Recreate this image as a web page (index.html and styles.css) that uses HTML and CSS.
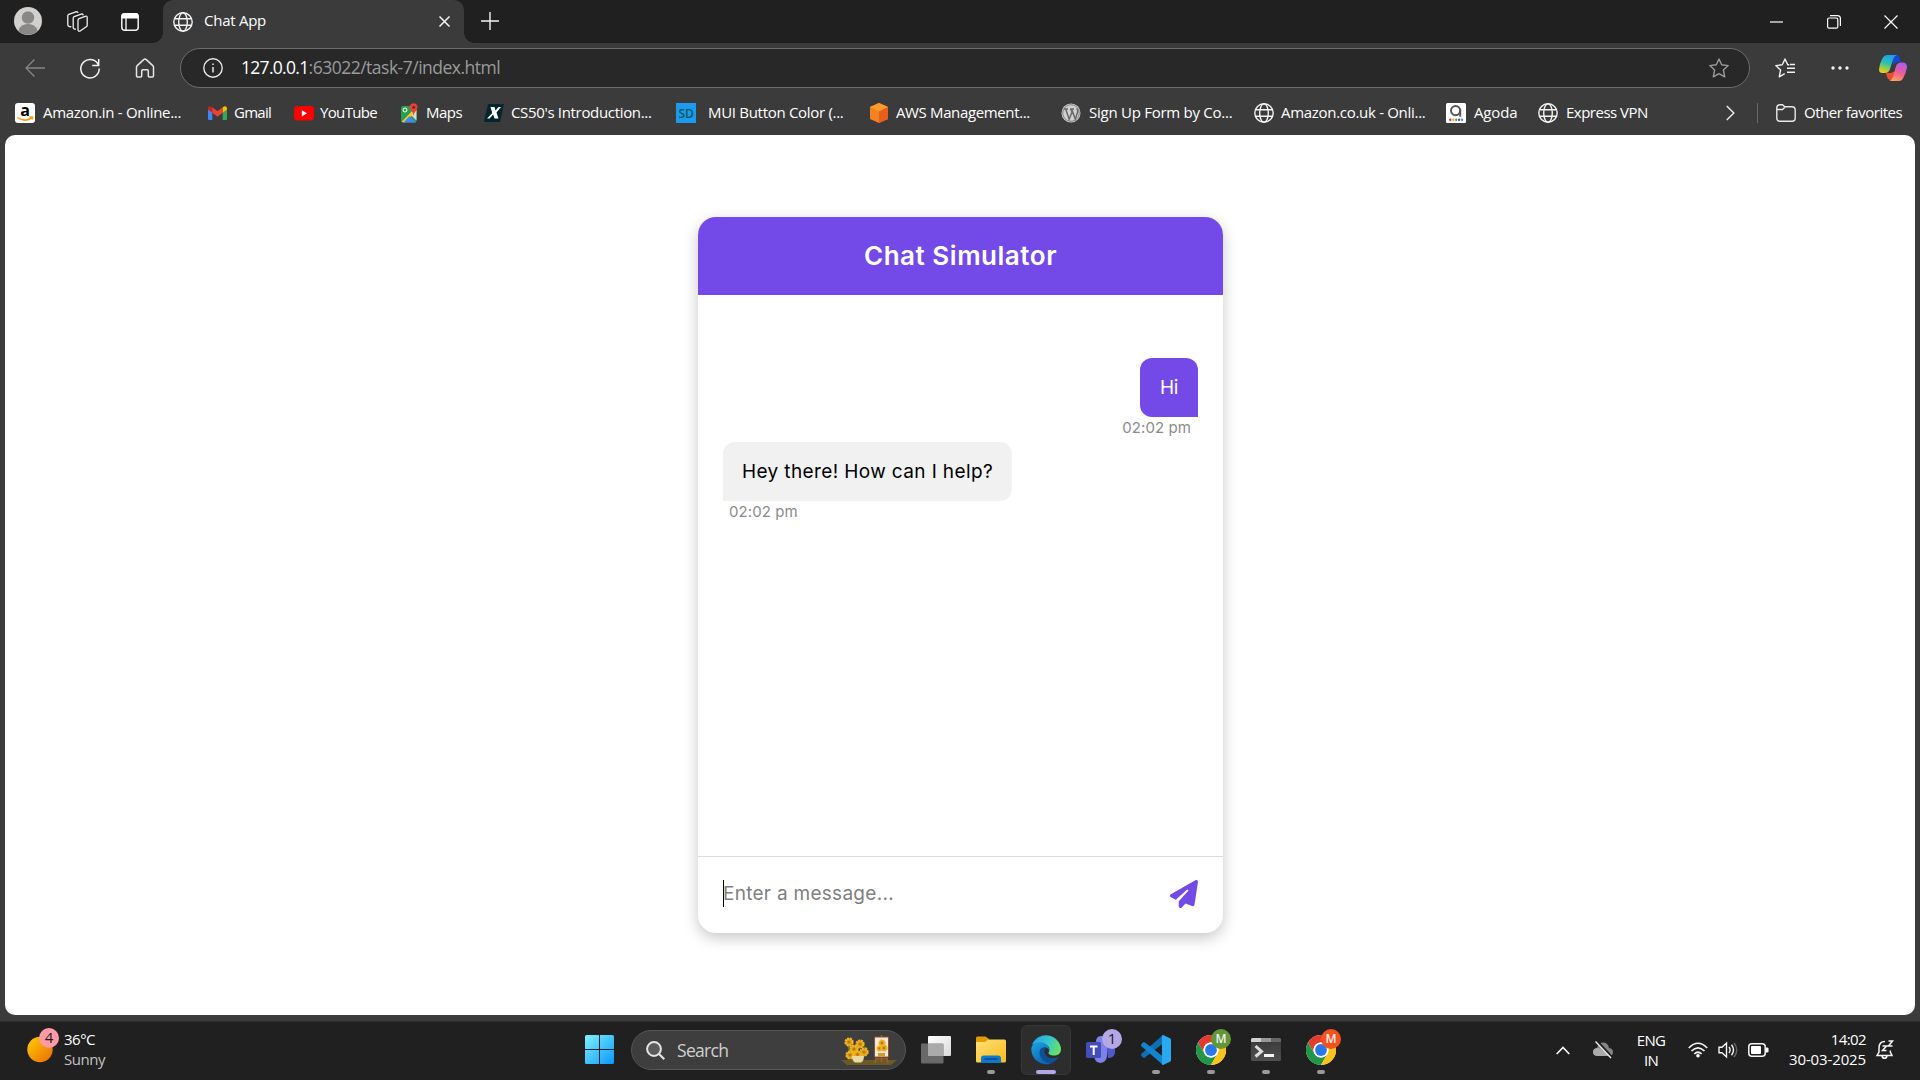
FILE: index.html
```html
<!DOCTYPE html>
<html lang="en">
<head>
<meta charset="utf-8">
<title>Chat App</title>
<link rel="stylesheet" href="styles.css">
</head>
<body>
<svg class="defs" width="0" height="0" aria-hidden="true">
  <defs>
    <linearGradient id="sun" x1="0" y1="0" x2="1" y2="1"><stop offset="0.1" stop-color="#ffc400"/><stop offset="1" stop-color="#e86a04"/></linearGradient>
    <linearGradient id="win" x1="0" y1="0" x2="1" y2="1"><stop offset="0" stop-color="#7ff1ff"/><stop offset="1" stop-color="#0a97fb"/></linearGradient>
    <linearGradient id="view" x1="0" y1="0" x2="1" y2="1"><stop offset="0" stop-color="#fff"/><stop offset="1" stop-color="#d9d9d9"/></linearGradient>
    <linearGradient id="folder" x1="0" y1="0" x2="1" y2="1"><stop offset="0" stop-color="#ffdf76"/><stop offset="1" stop-color="#fcbc1b"/></linearGradient>
    <linearGradient id="edgeTop" x1="0" y1="0.2" x2="1" y2="0.6"><stop offset="0" stop-color="#2a9fe6"/><stop offset="0.5" stop-color="#33c4d2"/><stop offset="1" stop-color="#68e264"/></linearGradient>
    <linearGradient id="edgeLeft" x1="0" y1="0" x2="0.6" y2="1"><stop offset="0" stop-color="#1fa2e2"/><stop offset="1" stop-color="#0767b8"/></linearGradient>
    <linearGradient id="copA" x1="0.6" y1="0" x2="0.3" y2="1"><stop offset="0" stop-color="#1f9df1"/><stop offset="0.45" stop-color="#2bbfb4"/><stop offset="0.8" stop-color="#a5cf3d"/><stop offset="1" stop-color="#f6c816"/></linearGradient>
    <linearGradient id="copB" x1="0.7" y1="0" x2="0.3" y2="1"><stop offset="0" stop-color="#a95cf2"/><stop offset="0.5" stop-color="#ec5c96"/><stop offset="1" stop-color="#ffa25c"/></linearGradient>
    <linearGradient id="term" x1="0" y1="0" x2="0" y2="1"><stop offset="0" stop-color="#383838"/><stop offset="1" stop-color="#505050"/></linearGradient>
    <symbol id="globe" viewBox="0 0 20 20"><g fill="none" stroke="#f3f3f3" stroke-width="1.4"><circle cx="10" cy="10" r="9.2"/><ellipse cx="10" cy="10" rx="4.3" ry="9.2"/><path d="M1.6 6.8h16.8M1.6 13.2h16.8"/></g></symbol>
    <symbol id="chrome" viewBox="0 0 30 30">
      <circle cx="15" cy="15" r="15" fill="#fff"/>
      <path d="M2 7.5A15 15 0 0 1 28 7.5H15a7.5 7.5 0 0 0-6.5 11.25z" fill="#e33b2e"/>
      <path d="M2 7.5A15 15 0 0 0 15 30l6.500-11.250a7.5 7.5 0 0 1-13 0z" fill="#219548"/>
      <path d="M28 7.5A15 15 0 0 1 15 30l6.500-11.250a7.5 7.5 0 0 0-6.5-11.250z" fill="#fcc418"/>
      <circle cx="15" cy="15" r="7.5" fill="#fff"/><circle cx="15" cy="15" r="5.9" fill="#2a78e8"/>
    </symbol>
    <symbol id="bloom" viewBox="0 0 10 10"><circle cx="5" cy="5" r="3.6" fill="#e8a317" stroke="#f0b625" stroke-width="2" stroke-dasharray="2.2 .7"/><circle cx="5" cy="5" r="1.6" fill="#b77a12"/></symbol>
  </defs>
</svg>

<header class="tabbar">
  <svg class="avatar" width="28" height="28" viewBox="0 0 28 28"><circle cx="14" cy="14" r="14" fill="#d2d0ce"/><circle cx="14" cy="10.500" r="6.200" fill="#8a8886"/><path d="M4.500 24a9.500 7 0 0 1 19 0A14 14 0 0 1 4.500 24z" fill="#8a8886"/></svg>
  <svg width="21" height="21" viewBox="0 0 21 21" fill="none" stroke="#f0f0f0" stroke-width="1.300" stroke-linejoin="round"><path d="M12 7.700l6.200-2.400q2-.6 2 1.200v7.800q0 1-1 1.500l-5.700 4q-2.500 1.200-2.500-1.200V9.500q0-1.300 1-1.800z"/><path d="M9 18.200q-2.800.2-2.800-2V7.200q0-1.200 1-1.600l7-2.500q1.800-.5 2 1.200"/><path d="M4.300 15.700Q.8 16 .8 13.500V5q0-1.200 1-1.600L8.800.9q1.800-.5 2.300 1"/></svg>
  <svg width="18" height="18" viewBox="0 0 18 18"><rect x=".8" y=".8" width="16.400" height="16.400" rx="3" fill="none" stroke="#f3f3f3" stroke-width="1.500"/><path d="M.5 5.500V3a3 3 0 0 1 3-3h11a3 3 0 0 1 3 3v2.500z" fill="#fff"/><path d="M5 5v12" stroke="#f3f3f3" stroke-width="1.400"/></svg>
  <div class="tab">
    <svg width="20" height="20"><use href="#globe"/></svg>
    <span class="tab-title">Chat App</span>
    <svg class="tab-close" width="11" height="11" viewBox="0 0 11 11" stroke="#f5f5f5" stroke-width="1.500"><path d="M.5.5l10 10M10.500.5l-10 10"/></svg>
  </div>
  <svg class="new-tab" width="18" height="18" viewBox="0 0 18 18" stroke="#f3f3f3" stroke-width="1.400"><path d="M0 9h18M9 0v18"/></svg>
  <div class="window-buttons">
    <svg width="14" height="14" viewBox="0 0 14 14"><path d="M0 7h13" stroke="#fff" stroke-width="1.200"/></svg>
    <svg width="14" height="14" viewBox="0 0 14 14" fill="none" stroke="#fff" stroke-width="1.200"><rect x=".6" y="3" width="10.200" height="10.200" rx="1.500"/><path d="M3 .6h7.500q2.900 0 2.900 2.900V11"/></svg>
    <svg width="14" height="14" viewBox="0 0 14 14" stroke="#fff" stroke-width="1.200"><path d="M.5.5l13 13M13.500.5l-13 13"/></svg>
  </div>
</header>

<nav class="toolbar">
  <svg width="20" height="20" viewBox="0 0 20 20" fill="none" stroke="#858585" stroke-width="1.400"><path d="M20 10H1M9.500 1.500L1 10l8.500 8.500"/></svg>
  <svg width="20" height="20" viewBox="0 0 20 20" fill="none" stroke="#f3f3f3" stroke-width="1.500"><path d="M18.800 8A9.200 9.200 0 1 0 19.200 10.500M18.700 1v6.500h-6.500"/></svg>
  <svg width="20" height="20" viewBox="0 0 20 20" fill="none" stroke="#e5e5e5" stroke-width="1.500" stroke-linejoin="round"><path d="M1.500 9q0-.8.700-1.400l6.500-6q1.300-1 2.600 0l6.500 6q.7.600.7 1.400v9q0 1-1 1h-3.200q-1 0-1-1v-5q0-1.200-1.200-1.200H7.900q-1.200 0-1.200 1.200v5q0 1-1 1H2.500q-1 0-1-1z"/></svg>
  <div class="address">
    <svg width="20" height="20" viewBox="0 0 20 20"><circle cx="10" cy="10" r="9.200" fill="none" stroke="#e8e8e8" stroke-width="1.400"/><path d="M10 9v5.500M10 5.500v1.600" stroke="#e8e8e8" stroke-width="1.500"/></svg>
    <span class="url"><b>127.0.0.1</b>:63022/task-7/index.html</span>
    <svg width="20" height="20" viewBox="0 0 20 20" fill="none" stroke="#9a9a9a" stroke-width="1.400" stroke-linejoin="round"><path d="M10 1l2.700 5.800 6.500.8-4.800 4.400 1.300 6.800L10 15.600l-5.700 3.200L5.600 12 .8 7.600l6.500-.8z"/></svg>
  </div>
  <svg width="21" height="20" viewBox="0 0 21 20" fill="none" stroke="#f3f3f3" stroke-width="1.400" stroke-linejoin="round"><path d="M14.300 6.800h-1.600L10 1 7.300 6.800l-6.500.8L5.600 12l-1.300 6.800 5.400-3.100M12 10.200h8M12 14.200h8M15 6.500h5"/></svg>
  <svg width="18" height="20" viewBox="0 0 18 20" fill="#f3f3f3"><circle cx="2" cy="10" r="1.700"/><circle cx="9" cy="10" r="1.700"/><circle cx="16" cy="10" r="1.700"/></svg>
  <svg width="28" height="26" viewBox="0 0 28 26"><path d="M14 0h3q3 0 4 4l1 3h-4l-4 3z" fill="#1348d8"/><path d="M7 18h5l4-2-1 9h-3q-3 0-4-3z" fill="#f04c31"/><path d="M8 0h10q-3 1-3.800 4L11 14q-1.300 4-5 4H3.500Q0 18 0 14.500 1 7 4 2.500 5.300 0 8 0z" fill="url(#copA)"/><path d="M20 26H10q3-.8 4-4l3-11q1.300-3.500 5-3.500h2.500Q28 8 28 12q-1 7-4 11.500Q22.700 26 20 26z" fill="url(#copB)"/></svg>
</nav>

<nav class="bookmarks">
  <a class="bm bm-amazon"><svg width="20" height="20" viewBox="0 0 20 20"><rect width="20" height="20" rx="3" fill="#fff"/><text x="10" y="13" text-anchor="middle" class="amazon-a">a</text><path d="M2.500 14.500q7 5 14 .5M14.500 14h3v2.500" fill="none" stroke="#ff9900" stroke-width="1.500"/></svg><span>Amazon.in - Online...</span></a>
  <a class="bm bm-gmail"><svg width="19" height="14" viewBox="0 0 19 14"><path d="M0 2v11q0 1 1 1h3.300V5z" fill="#4285f4"/><path d="M19 2v11q0 1-1 1h-3.300V5z" fill="#34a853"/><path d="M0 2.500Q0 0 2.500.3l2 1.200v5.300L0 3.500z" fill="#c5221f"/><path d="M19 2.500Q19 0 16.500.3l-2 1.200v5.300L19 3.500z" fill="#fbbc04"/><path d="M4.300 1.300l5.200 4 5.200-4v5.400l-5.200 4-5.200-4z" fill="#ea4335"/></svg><span>Gmail</span></a>
  <a class="bm bm-youtube"><svg width="20" height="15" viewBox="0 0 20 15"><rect width="20" height="14.500" rx="3.500" fill="#f00"/><path d="M7.800 4.200v6.200l5.200-3.100z" fill="#fff"/></svg><span>YouTube</span></a>
  <a class="bm bm-maps"><svg width="19" height="20" viewBox="0 0 19 20"><rect x="1" y="3" width="15.500" height="16.500" rx="2" fill="#28a052"/><path d="M10 11l6.500 6.500V7z" fill="#d8dce0"/><path d="M1.500 19L13 7l3.500 1L5 19.500z" fill="#fbc82b"/><path d="M3.500 19.500l6-6.500 6.500 6.500z" fill="#4387f2"/><circle cx="5" cy="7" r="2" fill="none" stroke="#fff" stroke-width="1"/><path d="M13.500 13q0-3.500-2.400-5.500a4 4 0 1 1 5.100-.3q-2.300 2.300-2.700 5.800z" fill="#e64436"/><circle cx="13.700" cy="4.300" r="1.500" fill="#8d1d14"/></svg><span>Maps</span></a>
  <a class="bm bm-cs50"><svg width="20" height="18" viewBox="0 0 20 18"><path d="M4 0h16l-4 18H0z" fill="#03262e"/><path d="M6.500 3h4l1 3.500L14.500 3H17l-4.500 5.500 2 6h-4l-1.300-4L5.500 14.500H3L8.300 9z" fill="#fff"/></svg><span>CS50's Introduction...</span></a>
  <a class="bm bm-mui"><svg width="20" height="20" viewBox="0 0 20 20"><rect width="20" height="20" fill="#1b9af0"/><text x="10" y="14.500" text-anchor="middle" class="sd">SD</text></svg><span>MUI Button Color (...</span></a>
  <a class="bm bm-aws"><svg width="18" height="20" viewBox="0 0 18 20"><path d="M9 0l9 4v12l-9 4-9-4V4z" fill="#f58220"/><path d="M9 0l9 4-9 4.500L0 4z" fill="#fc9a2b"/><path d="M18 4v12l-9 4V8.500z" fill="#e95e1c"/></svg><span>AWS Management...</span></a>
  <a class="bm bm-form"><svg width="20" height="20" viewBox="0 0 20 20"><circle cx="10" cy="10" r="9.500" fill="#d0d0d0"/><circle cx="10" cy="10" r="8.300" fill="none" stroke="#858585"/><path d="M3 6h4M9 6h4M4.700 6.200l3.500 10L11 9 9.800 6.200M11 7l3.200 9 2.500-7q.3-2-1-3.500" fill="none" stroke="#6a6a6a" stroke-width="1.500"/></svg><span>Sign Up Form by Co...</span></a>
  <a class="bm bm-uk"><svg width="20" height="20"><use href="#globe"/></svg><span>Amazon.co.uk - Onli...</span></a>
  <a class="bm bm-agoda"><svg width="20" height="20" viewBox="0 0 20 20"><rect width="20" height="20" rx="1.500" fill="#fff"/><circle cx="9.600" cy="7.600" r="4.600" fill="none" stroke="#555" stroke-width="2"/><path d="M14.200 7v6.700" stroke="#555" stroke-width="2"/><g><circle cx="4.300" cy="16.800" r="1.200" fill="#e12b3c"/><circle cx="7.300" cy="16.800" r="1.200" fill="#f6a81c"/><circle cx="10.200" cy="16.800" r="1.200" fill="#4caf50"/><circle cx="13.100" cy="16.800" r="1.200" fill="#6b4ca0"/><circle cx="16" cy="16.800" r="1.200" fill="#2fa3e6"/></g></svg><span>Agoda</span></a>
  <a class="bm bm-vpn"><svg width="20" height="20"><use href="#globe"/></svg><span>Express VPN</span></a>
  <svg width="9" height="16" viewBox="0 0 9 16" fill="none" stroke="#e8e8e8" stroke-width="1.500"><path d="M.8 1l7 7-7 7"/></svg>
  <i class="divider"></i>
  <a class="bm bm-other"><svg width="20" height="18" viewBox="0 0 20 18" fill="none" stroke="#e8e8e8" stroke-width="1.400"><path d="M.8 4q0-3.200 3.200-3.200h2.500l2.300 2H16q3.200 0 3.200 3.200v8q0 3.200-3.200 3.200H4Q.8 17.200.8 14zM.8 5.500h5.700l2.300-2.300"/></svg><span>Other favorites</span></a>
</nav>

<main class="page">
  <section class="chat">
    <h1 class="chat-header">Chat Simulator</h1>
    <div class="messages">
      <div class="message sent"><p class="bubble">Hi</p><time>02:02 pm</time></div>
      <div class="message received"><p class="bubble">Hey there! How can I help?</p><time>02:02 pm</time></div>
    </div>
    <div class="composer">
      <div class="field"><i class="caret"></i><span>Enter a message...</span></div>
      <svg width="28" height="28" viewBox="0 0 512 512"><path fill="#734ae8" d="M498.100 5.600c10.100 7 15.400 19.100 13.500 31.200l-64 416c-1.500 9.700-7.400 18.200-16 23s-18.900 5.400-28 1.600L284 427.700l-68.500 74.100c-8.900 9.700-22.900 12.900-35.200 8.100S160 493.200 160 480V396.400c0-4 1.500-7.800 4.200-10.700L331.800 202.800c5.800-6.300 5.600-16-.4-22s-15.700-6.400-22-.7L106 360.800 17.700 316.600C7.100 311.300 .3 300.700 0 288.900s5.900-22.800 16.100-28.700l448-256c10.700-6.100 23.900-5.500 34 1.400z"/></svg>
    </div>
  </section>
</main>

<footer class="taskbar">
  <div class="weather">
    <svg width="32" height="36" viewBox="0 0 32 36"><circle cx="13" cy="21.500" r="12.700" fill="url(#sun)"/><circle cx="22" cy="10" r="10" fill="#ff99a4"/><text x="22" y="15.200" text-anchor="middle" class="badge-text">4</text></svg>
    <div class="weather-text"><span class="temp">36°C</span><span class="sky">Sunny</span></div>
  </div>

  <div class="apps">
    <div class="app"><svg width="29" height="29" viewBox="0 0 29 29"><path d="M0 1.500Q0 0 1.500 0H14v14H0zM15 0h12.500Q29 0 29 1.500V14H15zM0 15h14v14H1.500Q0 29 0 27.500zM15 15h14v12.500q0 1.500-1.500 1.500H15z" fill="url(#win)"/></svg></div>
    <div class="search">
      <svg width="19" height="19" viewBox="0 0 19 19" fill="none" stroke="#e5e5e5" stroke-width="2"><circle cx="8" cy="8" r="6.900" fill="#5b5b5b"/><path d="M13 13l5.300 5.300"/></svg>
      <span>Search</span>
      <svg class="flowers" width="56" height="30" viewBox="0 0 56 30"><path d="M0 25h56l-6 5H6z" fill="#6b5a26"/><path d="M8 10q4 14 8 14t9-12" stroke="#6d7520" stroke-width="4" fill="none"/><use href="#bloom" x="3" y="2" width="10" height="10"/><use href="#bloom" x="14" y="4" width="10" height="10"/><use href="#bloom" x="8" y="9" width="10" height="10"/><use href="#bloom" x="4" y="15" width="10" height="10"/><use href="#bloom" x="18" y="12" width="10" height="10"/><use href="#bloom" x="12" y="15" width="9" height="9"/><path d="M11 21h12q0 5-3 6.500h-6Q11 26 11 21z" fill="#ead9a0"/><path d="M36 19l-2 9M45 19l2 9M40.500 0v2M40.500 21v6M35 24h11" stroke="#a55b27" stroke-width="1.500"/><path d="M33.500 2h14v20h-14z" fill="#f1e9da" stroke="#93501f"/><path d="M37 18h7v3h-7z" fill="#d39a2e"/><use href="#bloom" x="37" y="4" width="8" height="8"/><use href="#bloom" x="35" y="10" width="7" height="7"/><use href="#bloom" x="39" y="9" width="8" height="8"/></svg>
    </div>
    <div class="app"><svg width="30" height="28" viewBox="0 0 30 28"><rect x="7" y="0" width="23" height="20" rx="1" fill="url(#view)"/><rect x="0" y="7.500" width="22.500" height="20" rx="1" fill="#777" fill-opacity=".85"/><path d="M7 8h15.500v12H7z" fill="#aaa"/></svg></div>
    <div class="app running"><svg width="30" height="28" viewBox="0 0 30 28"><path d="M0 2q0-1.500 1.500-1.500h8L13 3v6H0z" fill="#e29d05"/><path d="M0 6h9l3.500-2.500h16Q30 3.500 30 5v20q0 1.500-1.500 1.500h-27Q0 26.500 0 25z" fill="url(#folder)"/><path d="M5 27v-4.500q0-3 3-3h14q3 0 3 3V27z" fill="#0c79ce"/><path d="M8.500 23h13" stroke="#064a85" stroke-width="1.500"/></svg></div>
    <div class="app active"><svg width="30" height="30" viewBox="0 0 30 30"><path d="M1 10A15 15 0 0 1 30 14c0 5-3.500 6.500-7 6.500-4 0-6-1.500-5.500-3 2-2 1-7-4-8.500C8 7.500 3 9 1 10z" fill="url(#edgeTop)"/><path d="M.3 13.500C1 9 5 7 9.500 7.300c6 .4 9 4.500 8.500 8-.5-1.500-2-2.800-4-2.800-3.500.3-5 4-3.500 8.500 1.500 4 5 6.500 9 7.700A15 15 0 0 1 .3 13.500z" fill="url(#edgeLeft)"/><path d="M9 15c-2 6 3 13 10.500 13.700 3-1 6-3.200 7.800-6.200.3-.6 0-.8-.6-.5C20 25 13 22 13.500 15.500c.2-1.500 1-2.500 2-3C12.500 12 9.800 13 9 15z" fill="#104f95"/></svg></div>
    <div class="app"><svg class="lift" width="36" height="34" viewBox="0 0 36 34"><circle cx="15" cy="12" r="5" fill="#7b83eb"/><path d="M20 14h9v10q-1 5-7 5z" fill="#5059c9"/><path d="M8 15h13v12q-.5 6-6.500 7Q8 33 8 26z" fill="#7b83eb"/><rect x="0" y="13" width="15" height="16" rx="1.500" fill="#454db8"/><path d="M4 17.500h7.500M7.700 17.500V26" stroke="#fff" stroke-width="2"/><circle cx="26" cy="10" r="10" fill="#b4a7e5"/><text x="26" y="15.300" text-anchor="middle" class="badge-text">1</text></svg></div>
    <div class="app running"><svg width="30" height="30" viewBox="0 0 30 30"><path d="M22 0v8.500L4 22.500q-1 .6-2 0L.5 21q-1-1.200 0-2.200z" fill="#0f6fb5"/><path d="M22 30v-8.500L4 7.500q-1-.6-2 0L.5 9q-1 1.200 0 2.200z" fill="#1384cf"/><path d="M22 0l7 3.300q1 .5 1 1.600v20.200q0 1.100-1 1.600L22 30q-1 .2-1-1V1q0-1.200 1-1z" fill="#2aa9f3"/></svg></div>
    <div class="app running"><svg width="30" height="30"><use href="#chrome"/></svg><b class="profile green">M</b></div>
    <div class="app running"><svg width="30" height="23" viewBox="0 0 30 23"><rect width="30" height="23" rx="1.500" fill="url(#term)"/><path d="M0 4V1.500Q0 0 1.500 0H10v4z" fill="#d0d0d0"/><path d="M10 0h10v4H10z" fill="#999"/><path d="M20 0h8.500Q30 0 30 1.500V4H20z" fill="#666"/><path d="M4.500 8l6 5.500-6 5" fill="none" stroke="#ddd" stroke-width="3"/><path d="M13 17.500h10" stroke="#f3f3f3" stroke-width="3"/></svg></div>
    <div class="app running"><svg width="30" height="30"><use href="#chrome"/></svg><b class="profile orange">M</b></div>
  </div>

  <div class="tray">
    <svg width="14" height="9" viewBox="0 0 14 9" fill="none" stroke="#f5f5f5" stroke-width="1.700"><path d="M.7 8L7 1.500 13.300 8"/></svg>
    <svg width="20" height="18" viewBox="0 0 20 18"><path d="M5 15q-5 0-5-4 0-3.500 4-4 1.500-5.500 6-5.500 5 0 6 5.500 4 .5 4 4t-4 4z" fill="#858585"/><path d="M5 15q-5 0-5-4 0-3.500 4-4 4 0 6 3l9.500 3Q18.500 15 16 15z" fill="#aaa"/><path d="M3.500 0L19 16.500" stroke="#202020" stroke-width="3"/><path d="M2.500.5L18 17" stroke="#eee" stroke-width="1.400"/></svg>
    <div class="lang"><span>ENG</span><span>IN</span></div>
    <svg class="wifi" width="20" height="16" viewBox="0 0 20 16" fill="none" stroke="#f5f5f5" stroke-width="1.700"><path d="M.8 6q9.200-9.500 18.400 0M3.500 9q6.500-6.500 13 0M6.300 12q3.700-3.500 7.400 0"/><circle cx="10" cy="13.800" r="1.800" fill="#fff" stroke="none"/></svg>
    <svg class="volume" width="20" height="16" viewBox="0 0 20 16" fill="none" stroke="#f5f5f5" stroke-width="1.400"><path d="M1 5.200h3L8.500 1v14L4 10.800H1zM11 5q2.200 3 0 6M13.500 2.800q4 5.200 0 10.400"/><path d="M16 .8q5.500 7.200 0 14.400" stroke="#666"/></svg>
    <svg class="battery" width="21" height="14" viewBox="0 0 21 14"><rect x=".8" y=".8" width="16.400" height="12.400" rx="3" fill="none" stroke="#f5f5f5" stroke-width="1.500"/><rect x="3" y="3" width="10" height="8" rx="1" fill="#fff"/><path d="M18 4.500h1q1.500 0 1.500 1.300v2.400q0 1.300-1.500 1.300h-1z" fill="#fff"/></svg>
    <div class="clock"><span class="hour">14:02</span><span class="date">30-03-2025</span></div>
    <svg class="bell" width="18" height="19" viewBox="0 0 18 19" fill="none" stroke="#f5f5f5" stroke-width="1.500"><path d="M9 1.500Q3 1.500 3 8v4L1 15.500h15L14.300 12v-1.500M6 16q.5 2.300 2.500 2.300T11 16M6.500 6h4l-4 4.500h4M12.500 1h4l-4 5h4"/></svg>
  </div>
</footer>
</body>
</html>
```
FILE: styles.css
```css
* { box-sizing: border-box; }
body {
  margin: 0;
  width: 1920px;
  height: 1080px;
  overflow: hidden;
  display: grid;
  grid-template-rows: 43px 50px 42px 880px 6px 59px;
  background: #3b3b3b;
  color: #fff;
  font: 15px/20px "Open Sans", "Noto Sans", sans-serif;
  white-space: nowrap;
}
svg { display: block; flex: none; overflow: visible; }
.defs { position: absolute; }

/* Tab strip */
.tabbar {
  display: flex;
  align-items: center;
  padding-left: 14px;
  background: #202020;
}
.avatar { margin: -1px 25px 0 0; }
.avatar + svg { margin-right: 33px; }
.tab {
  position: relative;
  display: flex;
  align-items: center;
  width: 301px;
  height: 43px;
  margin-left: 24px;
  padding: 0 14px 0 10px;
  border-radius: 10px 10px 0 0;
  background: #3b3b3b;
}
.tab::before, .tab::after {
  content: "";
  position: absolute;
  bottom: 0;
  width: 10px;
  height: 10px;
}
.tab::before { left: -10px; background: radial-gradient(circle at 0 0, transparent 9.5px, #3b3b3b 10px); }
.tab::after { right: -10px; background: radial-gradient(circle at 100% 0, transparent 9.5px, #3b3b3b 10px); }
.tab-title { margin: -4px 0 0 11px; letter-spacing: -.26px; }
.tab-close { margin-left: auto; }
.new-tab { margin-left: 17px; margin-top: -2px; }
.window-buttons { display: flex; gap: 43px; margin-left: auto; padding-right: 22px; }

/* Navigation row */
.toolbar {
  display: grid;
  grid-template-columns: 55px 55px 45px 1595px 56px 48px 28px;
  align-items: center;
  padding-left: 25px;
}
.address {
  display: flex;
  align-items: center;
  width: 1570px;
  height: 40px;
  padding: 0 20px 0 22px;
  border: 1px solid #6d6d6d;
  border-radius: 20px;
  background: #282828;
}
.url { margin: -3px auto 0 18px; color: #9b9b9b; font-size: 17.5px; letter-spacing: -.5px; }
.url b { color: #fff; font-weight: 400; letter-spacing: -.7px; }

/* Bookmarks row */
.bookmarks {
  display: grid;
  grid-template-columns: 193px 86px 106px 84px 192px 194px 191px 193px 192px 92px 188px 31px 19px 120px;
  align-items: center;
  padding: 0 0 2px 15px;
}
.bm { display: flex; align-items: center; gap: 8px; letter-spacing: -.3px; }
.bm span { margin-top: -3px; }
.bm-gmail { gap: 7px; letter-spacing: -.72px; }
.bm-youtube { gap: 6px; letter-spacing: -.65px; }
.bm-maps { gap: 7px; letter-spacing: -.52px; }
.bm-cs50 { gap: 7px; letter-spacing: -.33px; }
.bm-mui { gap: 12px; }
.bm-aws { letter-spacing: -.36px; }
.bm-form { letter-spacing: -.26px; }
.bm-uk { gap: 7px; }
.bm-agoda { letter-spacing: -.15px; }
.bm-vpn { letter-spacing: -.5px; }
.bm-other { letter-spacing: -.48px; }
.divider { width: 1px; height: 20px; background: #666; }
.amazon-a { font: 700 16px "Open Sans", sans-serif; fill: #000; }
.sd { font: 600 12px "Open Sans", sans-serif; fill: #075b58; }

/* Page with the chat card */
.page {
  display: flex;
  justify-content: center;
  align-items: flex-start;
  margin: 0 5px;
  padding-top: 82px;
  border-radius: 10px;
  background: #fff;
}
.chat {
  display: flex;
  flex-direction: column;
  width: 525px;
  height: 716px;
  margin-left: 1px;
  border-radius: 18px;
  overflow: hidden;
  background: #fff;
  box-shadow: 0 5px 15px rgba(0, 0, 0, .22);
  color: #000;
  font-family: Inter, "Open Sans", sans-serif;
}
.chat-header {
  height: 78px;
  margin: 0;
  background: #734ae8;
  color: #fff;
  font-size: 26px;
  font-weight: 600;
  line-height: 77px;
  text-align: center;
  letter-spacing: .53px;
}
.messages {
  flex: 1;
  display: flex;
  flex-direction: column;
  gap: 3px;
  padding: 63px 25px 0;
}
.message { display: flex; flex-direction: column; align-items: flex-start; }
.bubble {
  height: 59px;
  margin: 0;
  padding: 0 19px;
  border-radius: 12px 12px 12px 0;
  background: #f1f1f1;
  font-size: 19px;
  line-height: 59px;
  letter-spacing: .38px;
}
.message time { padding: 0 6px; color: #8c8c8c; font-size: 15px; line-height: 22px; letter-spacing: .08px; }
.sent { align-items: flex-end; }
.sent time { padding-right: 7px; }
.sent .bubble { width: 58px; padding-left: 20px; border-radius: 12px 12px 0 12px; background: #734ae8; color: #fff; letter-spacing: -.3px; }
.composer {
  display: flex;
  justify-content: space-between;
  align-items: center;
  height: 77px;
  padding: 0 25px 3px;
  border-top: 1px solid #dcdcdc;
}
.field { position: relative; color: #808080; font-size: 19px; letter-spacing: .28px; }
.caret { position: absolute; left: 0; top: -4px; width: 1px; height: 27px; background: #000; }

/* Taskbar */
.taskbar {
  grid-row: 6;
  display: grid;
  grid-template-columns: 572px 984px 1fr;
  background: #202020;
  border-top: 1px solid #2d2d2d;
}
.weather { display: flex; padding: 6px 0 0 27px; }
.weather-text { display: grid; align-content: start; margin: 1px 0 0 5px; }
.temp { letter-spacing: -.5px; }
.sky { color: #c3c3c3; letter-spacing: -.45px; }
.badge-text { font: 15px "Open Sans", sans-serif; fill: #1c1c1c; }
.apps { display: flex; gap: 5px; padding-top: 3px; }
.app {
  position: relative;
  display: grid;
  place-items: center;
  width: 50px;
  height: 50px;
  padding-bottom: 1px;
  border-radius: 6px;
}
.app:first-child { width: 54px; }
.search {
  display: flex;
  align-items: center;
  width: 275px;
  height: 40px;
  margin: 5px 0 0;
  padding: 0 8px 0 14px;
  border: 1px solid #555;
  border-radius: 20px;
  background: #3e3e3e;
}
.search span { margin-left: 12px; color: #d0d0d0; font-size: 17.5px; letter-spacing: -.7px; }
.flowers { margin-left: auto; }
.active { background: #2d2d2d; border: 1px solid #373737; }
.running::after, .active::after {
  content: "";
  position: absolute;
  bottom: 1px;
  left: 50%;
  width: 8px;
  height: 4px;
  margin-left: -4px;
  border-radius: 2px;
  background: #999;
}
.active::after { bottom: 0; width: 20px; margin-left: -10px; background: #b4a7e5; }
.lift { margin: -8px 0 0 6px; }
.profile {
  position: absolute;
  left: 25px;
  top: 4px;
  width: 20px;
  height: 20px;
  border-radius: 50%;
  color: #f1f1f1;
  font: 600 12px/20px "Open Sans", sans-serif;
  text-align: center;
}
.green { background: #629638; }
.orange { background: #f4511e; }
.tray {
  display: grid;
  grid-template-columns: 37px 40px 55px 30px 30px 27px 101px 18px;
  align-items: center;
  padding-bottom: 2px;
}
.lang, .clock { display: grid; line-height: 20px; margin-top: -1px; }
.lang { justify-items: center; width: 36px; letter-spacing: -.7px; }
.clock { justify-items: end; width: 91px; margin-top: -3px; }
.hour { letter-spacing: -.6px; }
.date { letter-spacing: -.13px; }
.bell { margin-top: -1px; }
```
